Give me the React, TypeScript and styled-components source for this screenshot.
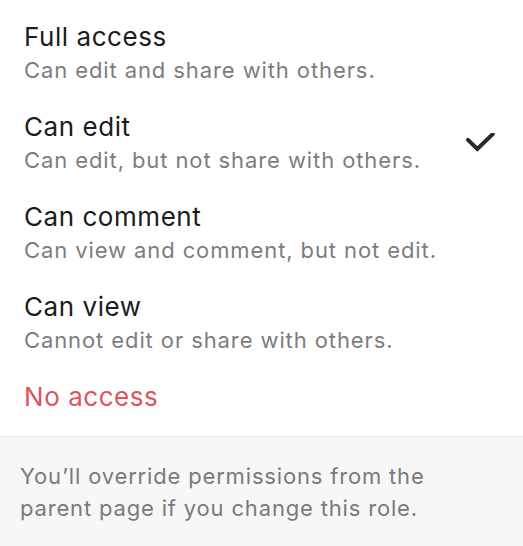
import React from "react";
import styled, { createGlobalStyle } from "styled-components";

const Global = createGlobalStyle`
  html, body { margin: 0; padding: 0; background: #ffffff; }
  body { font-family: Inter, "Noto Sans", "Liberation Sans", sans-serif; -webkit-font-smoothing: antialiased; }
`;

const Menu = styled.div`
  width: 523px;
  height: 546px;
  display: flex;
  flex-direction: column;
  background: #ffffff;
  overflow: hidden;
`;

const List = styled.div`
  display: flex;
  flex-direction: column;
  padding: 8px 0 10px;
`;

const Item = styled.div`
  display: flex;
  align-items: center;
  justify-content: space-between;
  padding: 12px 28px 12px 24px;
`;

const Texts = styled.div`
  display: flex;
  flex-direction: column;
`;

const Title = styled.div<{ $danger?: boolean }>`
  font-size: 26px;
  line-height: 34px;
  letter-spacing: 0.55px;
  color: ${(p) => (p.$danger ? "#e0545c" : "#1c1c1c")};
`;

const Desc = styled.div`
  font-size: 22px;
  line-height: 32px;
  letter-spacing: 0.9px;
  color: #7d7d7d;
`;

const Check = styled.svg`
  width: 30px;
  height: 20px;
  flex: none;
`;

const Footer = styled.div`
  flex: 1;
  border-top: 1px solid #e6e6e6;
  background: #f7f7f7;
  padding: 23px 20px 22px;
  font-size: 22px;
  line-height: 32px;
  letter-spacing: 0.83px;
  color: #7a7a7a;
`;

const roles = [
  { title: "Full access", desc: "Can edit and share with others." },
  { title: "Can edit", desc: "Can edit, but not share with others.", selected: true },
  { title: "Can comment", desc: "Can view and comment, but not edit." },
  { title: "Can view", desc: "Cannot edit or share with others." },
];

export default function App() {
  return (
    <>
      <Global />
      <Menu>
        <List>
          {roles.map((r) => (
            <Item key={r.title}>
              <Texts>
                <Title>{r.title}</Title>
                <Desc>{r.desc}</Desc>
              </Texts>
              {r.selected && (
                <Check viewBox="0 0 30 20">
                  <path d="M3 6.8 L12.3 16 L27.8 1" fill="none" stroke="#2a2a2a" strokeWidth="4" strokeLinecap="round" strokeLinejoin="miter" />
                </Check>
              )}
            </Item>
          ))}
          <Item>
            <Texts>
              <Title $danger>No access</Title>
            </Texts>
          </Item>
        </List>
        <Footer>
          You’ll override permissions from the
          <br />
          parent page if you change this role.
        </Footer>
      </Menu>
    </>
  );
}
